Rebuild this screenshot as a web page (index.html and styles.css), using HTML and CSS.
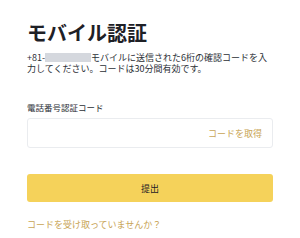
FILE: index.html
```html
<!DOCTYPE html>
<html lang="ja">
<head>
<meta charset="utf-8">
<link rel="stylesheet" href="styles.css">
</head>
<body>
<main class="page">
  <h1 class="title">モバイル認証</h1>
  <p class="desc"><span class="line">+81-<span class="masked"></span>モバイルに送信された6桁の確認コードを入</span><span class="line">力してください。コードは30分間有効です。</span></p>
  <label class="label">電話番号認証コード</label>
  <div class="field">
    <span class="get-code">コードを取得</span>
  </div>
  <button class="submit">提出</button>
  <a class="link">コードを受け取っていませんか？</a>
</main>
</body>
</html>
```

FILE: styles.css
```css
html, body {
  margin: 0;
  padding: 0;
  background: #ffffff;
}
body {
  font-family: "Noto Sans CJK JP", "Noto Sans", sans-serif;
  color: #1e2026;
}
.page {
  display: flex;
  flex-direction: column;
  align-items: stretch;
  padding: 21px 27px 0 27px;
  width: 246px;
}
.title {
  margin: 0;
  font-size: 20px;
  line-height: 24px;
  font-weight: 700;
  color: #1e2026;
}
.desc {
  margin: 7px 0 0 0;
  font-size: 9px;
  line-height: 11px;
  color: #2b2f36;
  white-space: nowrap;
}
.line {
  display: block;
  height: 11px;
}
.masked {
  display: inline-block;
  width: 46px;
  height: 9px;
  background: #d5d8de;
  vertical-align: -1px;
}
.label {
  margin-top: 28px;
  font-size: 8.5px;
  line-height: 11px;
  color: #2b2f36;
}
.field {
  margin-top: 5px;
  height: 28px;
  border: 1px solid #eaecef;
  border-radius: 3px;
  display: flex;
  align-items: center;
  justify-content: flex-end;
  padding-right: 10px;
}
.get-code {
  font-size: 9px;
  line-height: 11px;
  color: #c8a455;
}
.submit {
  margin-top: 26px;
  height: 28px;
  border: none;
  border-radius: 3px;
  background: #f5d25a;
  font-family: inherit;
  font-size: 9px;
  color: #1e2026;
  padding: 0;
}
.link {
  margin-top: 17px;
  font-size: 9px;
  line-height: 11px;
  color: #c8a455;
}
```
